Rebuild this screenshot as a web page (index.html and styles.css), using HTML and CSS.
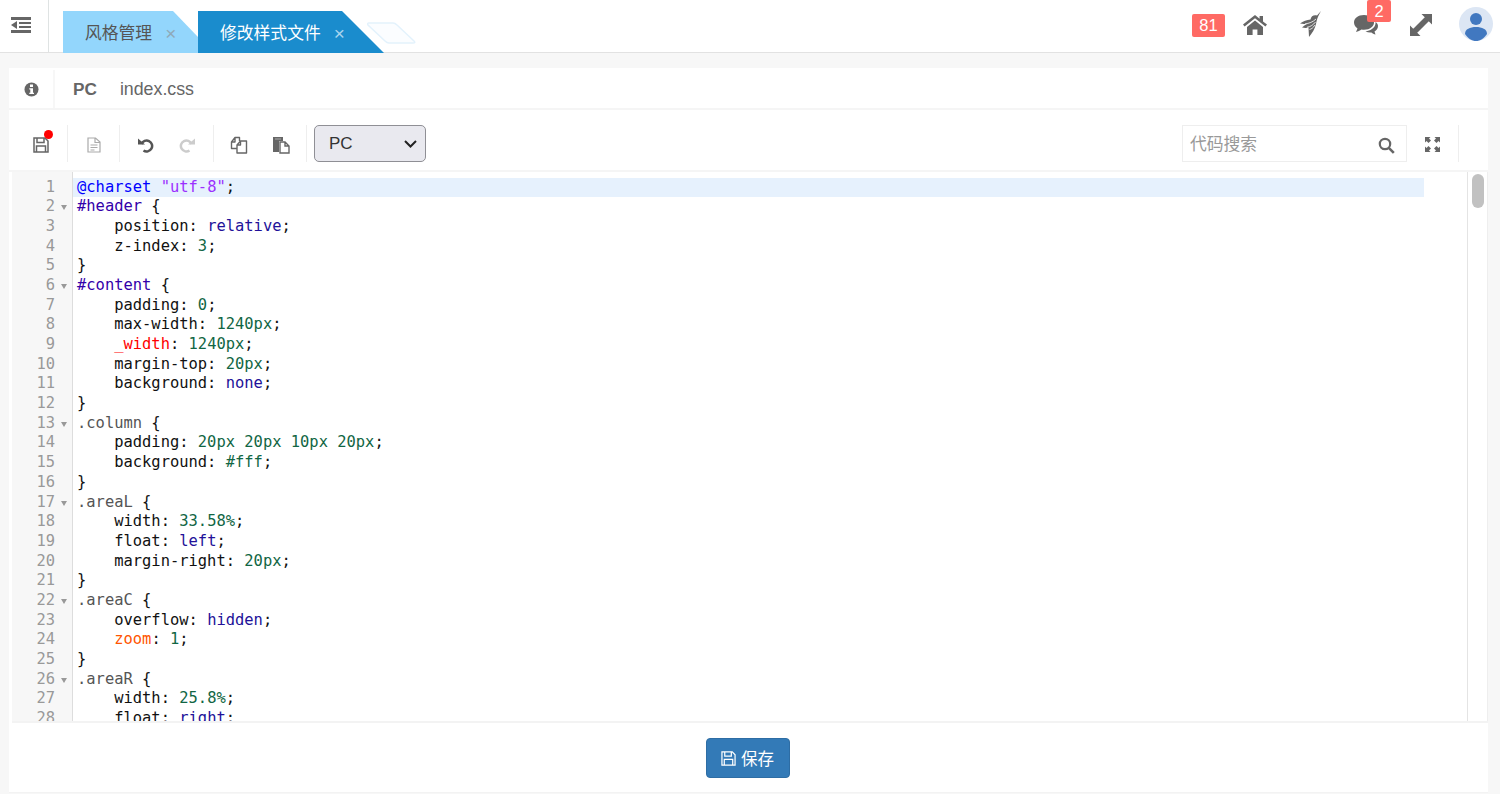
FILE: index.html
```html
<!DOCTYPE html>
<html lang="zh">
<head>
<meta charset="utf-8">
<title>修改样式文件</title>
<link rel="stylesheet" href="styles.css">
</head>
<body>
<header class="topbar">
  <div class="menu-btn">
    <svg width="20" height="16" viewBox="0 0 20 16"><path fill="#666" d="M0 0h20v3H0zM8 5h12v2H8zM8 9h12v2H8zM0 13h20v3H0zM6 4v8L0 8z"/></svg>
  </div>
  <nav class="tabs">
    <div class="tab tab-light"><span>风格管理</span><i class="close">×</i></div>
    <div class="tab tab-active"><span>修改样式文件</span><i class="close">×</i></div>
    <svg class="ghost" width="50" height="24" viewBox="0 0 50 24"><path d="M2 2h24q2 0 4 2l17 16q2 2-1 2H22q-2 0-4-2L1 4Q0 2 2 2z" fill="#fbfdff" stroke="#e3f2fc" stroke-width="1.5"/></svg>
  </nav>
  <div class="top-actions">
    <span class="badge badge-num">81</span>
    <svg class="ta home" width="24" height="20" viewBox="0 0 24 20"><path fill="#666" d="M12 0 0 9.600l1.600 2L12 3.200l10.400 8.400 1.600-2-4-3.200V1h-3.400v2.700zM4 12v8h5.600v-5.400h4.800V20H20v-8l-8-6.500z"/></svg>
    <svg class="ta bird" width="22" height="26" viewBox="0 0 22 26"><path fill="#666" d="M21 0 17 4.500C14 3.500 11 5 10.500 8.500 7 9 3 10 0 12.500 3 13 5 13 7 13 5 14 3 15.500 2 16.500 4.500 17 6.500 17 8.500 16.500L9 26C12 22 15 18 16 13 16.800 9.500 17 7 21 0z"/><path fill="none" stroke="#fff" stroke-width=".8" d="M16 8C13 11 9 12.500 5 12.800M15.500 11C13 14 11 15.500 7 16.300M15 14C13 17 11.500 18 9.500 18.500"/></svg>
    <div class="chat">
      <svg width="28" height="24" viewBox="0 0 28 24"><path fill="#666" d="M11 2C5 2 1 5.300 1 9.500c0 2.500 1.500 4.500 3.500 6L3 19c2-.5 4-1.500 5.500-2.500 1 .2 1.700.2 2.500.2 6 0 10-3.200 10-7.200S17 2 11 2z"/><path fill="#666" d="M22.500 9c.5 3.500-2 8-10 9.500 2 1 4 1.200 6 1 1 1 2.500 1.700 4 2l-1-3c2-1 3.500-3 3.500-5.500 0-2-1-3-2.500-4z"/></svg>
      <span class="badge badge-chat">2</span>
    </div>
    <svg class="ta expand" width="22" height="22" viewBox="0 0 22 22"><path fill="#666" d="M11.500 0H22v10.500zM0 11.500 10.500 22H0zM15 3l4 4L7 19l-4-4z"/></svg>
    <svg class="avatar" width="34" height="34" viewBox="0 0 34 34"><circle cx="17" cy="17" r="17" fill="#dce6f4"/><circle cx="17" cy="12" r="6" fill="#4178c0"/><path fill="#4178c0" d="M6 27c0-5 5-7 11-7s11 2 11 7c-3 4.500-7 7-11 7s-8-2.500-11-7z"/></svg>
  </div>
</header>

<main class="panel">
  <div class="crumbs">
    <div class="info">
      <svg width="15" height="15" viewBox="0 0 15 15"><circle cx="7.500" cy="7.500" r="7" fill="#666"/><rect x="6" y="2.500" width="3" height="2.500" fill="#fff"/><path fill="#fff" d="M5.300 6.200H9v4.600h1v1.300H5.300v-1.300h1V7.500h-1z"/></svg>
    </div>
    <strong class="crumb-pc">PC</strong>
    <span class="crumb-file">index.css</span>
  </div>

  <div class="toolbar">
    <div class="tool-group save-tool">
      <svg width="16" height="16" viewBox="0 0 16 16"><path fill="none" stroke="#666" stroke-width="1.500" d="M1 1h11l3 3v11H1z"/><path fill="none" stroke="#666" stroke-width="1.500" d="M4 1v4.500h7V1M3.500 15V9h9v6"/></svg>
      <i class="dot"></i>
    </div>
    <div class="tool-group g-file">
      <svg width="14" height="16" viewBox="0 0 14 16"><path fill="none" stroke="#aaa" stroke-width="1.200" d="M1 1h7.500L13 5v10H1zM8 1v4.500h5M3.500 8h7M3.500 10.500h7M3.500 13h4"/></svg>
    </div>
    <div class="tool-group g-history">
      <svg width="16" height="16" viewBox="0 0 16 16"><path fill="none" stroke="#555" stroke-width="2.500" d="M3.500 7a5.500 5.500 0 1 1 2 6.500"/><path fill="#555" d="M0 1.500 7 7.500H0z"/></svg>
      <svg width="16" height="16" viewBox="0 0 16 16"><path fill="none" stroke="#ccc" stroke-width="2.500" d="M12.500 7a5.500 5.500 0 1 0-2 6.500"/><path fill="#ccc" d="M16 1.500 9 7.500H16z"/></svg>
    </div>
    <div class="tool-group g-clip">
      <svg width="18" height="18" viewBox="0 0 18 18"><path fill="none" stroke="#666" stroke-width="1.400" stroke-linejoin="round" d="M7 12.500H1.500V6L5 1.500h4.500V5M7 12.500V9l3.500-4h6v12H7zM5 1.500V6H1.500M10.500 5v4H7"/></svg>
      <svg width="18" height="18" viewBox="0 0 18 18"><path fill="#666" d="M1 1h10v4H7v11H1z"/><path fill="#aaa" d="M3 2.500h6v1H3z"/><path fill="none" stroke="#666" stroke-width="1.400" d="M8 6h5l4 4v7H8zM13 6v4h4"/></svg>
    </div>
    <div class="select"><span>PC</span><svg width="13" height="8" viewBox="0 0 13 8"><path fill="none" stroke="#222" stroke-width="2" d="M1 1l5.500 5.500L12 1"/></svg></div>
    <div class="spacer"></div>
    <div class="search">
      <span class="search-text">代码搜索</span>
      <svg class="search-icon" width="17" height="17" viewBox="0 0 17 17"><circle cx="7" cy="7" r="5.200" fill="none" stroke="#666" stroke-width="2.200"/><path stroke="#666" stroke-width="2.600" d="m10.800 10.800 5 5"/></svg>
    </div>
    <div class="fullscreen">
      <svg width="15" height="15" viewBox="0 0 15 15"><path fill="#666" d="M0 0h5.500L4 1.500 6 3.500 3.500 6 1.500 4 0 5.500zM15 0v5.500L13.500 4l-2 2L9 3.500l2-2L9.500 0zM0 15V9.500L1.500 11l2-2L6 11.500l-2 2L5.500 15zM15 15H9.500l1.500-1.500-2-2L11.500 9l2 2 1.500-1.500z"/></svg>
    </div>
  </div>

  <div class="editor">
    <div class="gutter">
      <div>1</div><div class="fold">2</div><div>3</div><div>4</div><div>5</div><div class="fold">6</div><div>7</div><div>8</div><div>9</div><div>10</div><div>11</div><div>12</div><div class="fold">13</div><div>14</div><div>15</div><div>16</div><div class="fold">17</div><div>18</div><div>19</div><div>20</div><div>21</div><div class="fold">22</div><div>23</div><div>24</div><div>25</div><div class="fold">26</div><div>27</div><div>28</div>
    </div>
    <pre class="code"><div class="active"><b class="def">@charset</b> <b class="str">"utf-8"</b>;</div><div><b class="sel">#header</b> {</div><div>    position: <b class="kw">relative</b>;</div><div>    z-index: <b class="num">3</b>;</div><div>}</div><div><b class="sel">#content</b> {</div><div>    padding: <b class="num">0</b>;</div><div>    max-width: <b class="num">1240px</b>;</div><div>    <b class="err">_width</b>: <b class="num">1240px</b>;</div><div>    margin-top: <b class="num">20px</b>;</div><div>    background: <b class="kw">none</b>;</div><div>}</div><div><b class="cls">.column</b> {</div><div>    padding: <b class="num">20px 20px 10px 20px</b>;</div><div>    background: <b class="num">#fff</b>;</div><div>}</div><div><b class="cls">.areaL</b> {</div><div>    width: <b class="num">33.58%</b>;</div><div>    float: <b class="kw">left</b>;</div><div>    margin-right: <b class="num">20px</b>;</div><div>}</div><div><b class="cls">.areaC</b> {</div><div>    overflow: <b class="kw">hidden</b>;</div><div>    <b class="nonstd">zoom</b>: <b class="num">1</b>;</div><div>}</div><div><b class="cls">.areaR</b> {</div><div>    width: <b class="num">25.8%</b>;</div><div>    float: <b class="kw">right</b>;</div></pre>
    <div class="scrollbar"><div class="thumb"></div></div>
  </div>

  <div class="footer">
    <button class="save-btn" type="button">
      <svg width="15" height="15" viewBox="0 0 16 16"><path fill="none" stroke="#fff" stroke-width="1.300" d="M1 1h11l3 3v11H1z"/><path fill="none" stroke="#fff" stroke-width="1.300" d="M4 1v4.500h7V1M3.500 15V9h9v6"/></svg>
      <span>保存</span>
    </button>
  </div>
</main>
</body>
</html>
```
FILE: styles.css
```css
* { box-sizing: border-box; }
html, body { margin: 0; height: 794px; overflow: hidden; }
body {
  background: #f7f7f7;
  font-family: "Liberation Sans", "Noto Sans CJK SC", sans-serif;
  color: #666;
}
.topbar {
  height: 53px;
  background: #fff;
  border-bottom: 1px solid #e2e2e2;
  display: flex;
  align-items: stretch;
}
.menu-btn {
  width: 49px;
  border-right: 1px solid #dfe3e3;
  display: flex;
  align-items: flex-start;
  padding: 17px 0 0 11px;
}
.tabs {
  display: flex;
  align-items: flex-end;
  padding-left: 14px;
  margin-bottom: -1px;
  position: relative;
  flex: 1;
}
.tab {
  height: 42px;
  display: flex;
  align-items: center;
  font-size: 16.8px;
}
.tab-light {
  width: 135px;
  background: #93d6fc;
  color: #555;
  padding-left: 22px;
  clip-path: polygon(0 0, 110px 0, 135px 26px, 135px 42px, 0 42px);
}
.tab-active {
  width: 186px;
  background: #1a8ccd;
  color: #fff;
  padding-left: 22px;
  clip-path: polygon(0 0, 144px 0, 186px 42px, 0 42px);
}
.close {
  font-style: normal;
  font-size: 19px;
  margin-left: 13px;
  color: #8fa9b8;
  padding-top: 3px;
}
.tab-active .close { color: #a9d5ee; }
.ghost { margin: 0 0 8px -17px; }
.top-actions {
  display: flex;
  align-items: flex-start;
  padding-right: 7px;
}
.badge {
  background: #ff6a64;
  color: #fff;
  border-radius: 2px;
  font-size: 16.5px;
  text-align: center;
}
.badge-num {
  width: 33px;
  height: 23px;
  line-height: 23px;
  margin: 14px 18px 0 0;
}
.home { margin: 15px 33px 0 0; }
.bird { margin: 11px 31px 0 0; }
.chat { position: relative; width: 28px; margin: 13px 29px 0 0; }
.badge-chat {
  position: absolute;
  left: 14px;
  top: -13px;
  width: 24px;
  height: 22px;
  line-height: 23px;
}
.expand { margin: 14px 27px 0 0; }
.avatar { margin-top: 7px; }

.panel {
  margin: 15px 12px 0 9px;
  height: 725px;
  background: #fff;
  display: flex;
  flex-direction: column;
}
.crumbs {
  height: 42px;
  margin-bottom: 1px;
  flex: none;
  border-bottom: 2px solid #f5f5f5;
  display: flex;
  align-items: center;
  padding-top: 2px;
  font-size: 17.8px;
}
.info {
  width: 46px;
  align-self: stretch;
  border-right: 2px solid #f7f7f7;
  display: flex;
  align-items: center;
  justify-content: center;
}
.crumb-pc { margin-left: 18px; font-size: 17.2px; }
.crumb-file { margin-left: 23px; }

.toolbar {
  height: 61px;
  flex: none;
  display: flex;
  align-items: center;
  padding-top: 6px;
  border-bottom: 2px solid #f5f5f5;
}
.tool-group {
  height: 37px;
  display: flex;
  align-items: center;
  padding-top: 2px;
  border-right: 1px solid #eee;
  position: relative;
  flex: none;
}
.save-tool { width: 59px; padding-left: 24px; }
.dot {
  position: absolute;
  left: 35px;
  top: 5px;
  width: 9px;
  height: 9px;
  background: #f00;
  border-radius: 50%;
}
.g-file { width: 52px; padding-left: 19px; }
.g-history { width: 94px; padding-left: 18px; gap: 25px; }
.g-clip { width: 93px; padding-left: 16px; gap: 24px; }
.select {
  width: 112px;
  height: 37px;
  margin-left: 7px;
  flex: none;
  background: #e9e9ef;
  border: 1px solid #8f8f95;
  border-radius: 5px;
  color: #333;
  font-size: 17px;
  display: flex;
  align-items: center;
  justify-content: space-between;
  padding: 0 8px 0 14px;
}
.spacer { flex: 1; }
.search {
  width: 225px;
  height: 37px;
  flex: none;
  border: 1px solid #eee;
  display: flex;
  align-items: center;
  justify-content: space-between;
  padding: 0 11px 0 7px;
  font-size: 16.8px;
  color: #999;
}
.search-text { margin-bottom: 2px; }
.search-icon { margin-top: 3px; }
.fullscreen {
  width: 52px;
  height: 37px;
  flex: none;
  margin-right: 29px;
  border-right: 1px solid #eee;
  display: flex;
  align-items: center;
  padding: 2px 0 0 18px;
}

.editor {
  flex: 1;
  min-height: 0;
  margin-left: 3px;
  display: flex;
  overflow: hidden;
  font-family: "DejaVu Sans Mono", monospace;
  font-size: 15.44px;
  line-height: 19.7px;
  border-bottom: 2px solid #f3f3f3;
}
.gutter {
  width: 61px;
  flex: none;
  background: #f7f7f7;
  border-right: 1px solid #ddd;
  padding: 5.500px 17px 0 0;
  text-align: right;
  color: #999;
}
.gutter div { position: relative; height: 19.7px; }
.fold::after {
  content: "";
  position: absolute;
  right: -12px;
  top: 8px;
  border: 3.500px solid transparent;
  border-top: 5px solid #999;
  border-bottom: 0;
}
.code {
  flex: 1;
  margin: 0;
  padding: 5.500px 0 0;
  font: inherit;
  color: #111;
}
.code div { height: 19.7px; padding-left: 4px; margin-right: 43px; }
.code b { font-weight: normal; }
.code .active { background: #e6f1fd; }
.def { color: #00f; }
.str { color: #9b30ff; }
.sel { color: #30a; }
.kw { color: #219; }
.num { color: #164; }
.err { color: #f00; }
.cls { color: #555; }
.nonstd { color: #f50; }
.scrollbar {
  width: 21px;
  flex: none;
  background: #fff;
  border-left: 1px solid #e4e4e4;
  border-right: 1px solid #eee;
  padding: 2px 3px 0 4px;
}
.thumb {
  height: 34px;
  background: #c1c1c1;
  border-radius: 6px;
}
.footer {
  flex: 0 0 70px;
  display: flex;
  justify-content: center;
  align-items: flex-start;
  padding: 15px 2px 0 0;
  border-bottom: 1px solid #f3f3f3;
}
.save-btn {
  width: 84px;
  height: 40px;
  background: #337ab7;
  border: 1px solid #2e6da4;
  border-radius: 4px;
  color: #fff;
  font: 16.5px "Liberation Sans", "Noto Sans CJK SC", sans-serif;
  display: flex;
  align-items: center;
  justify-content: center;
  gap: 5px;
  padding: 0;
}
```
